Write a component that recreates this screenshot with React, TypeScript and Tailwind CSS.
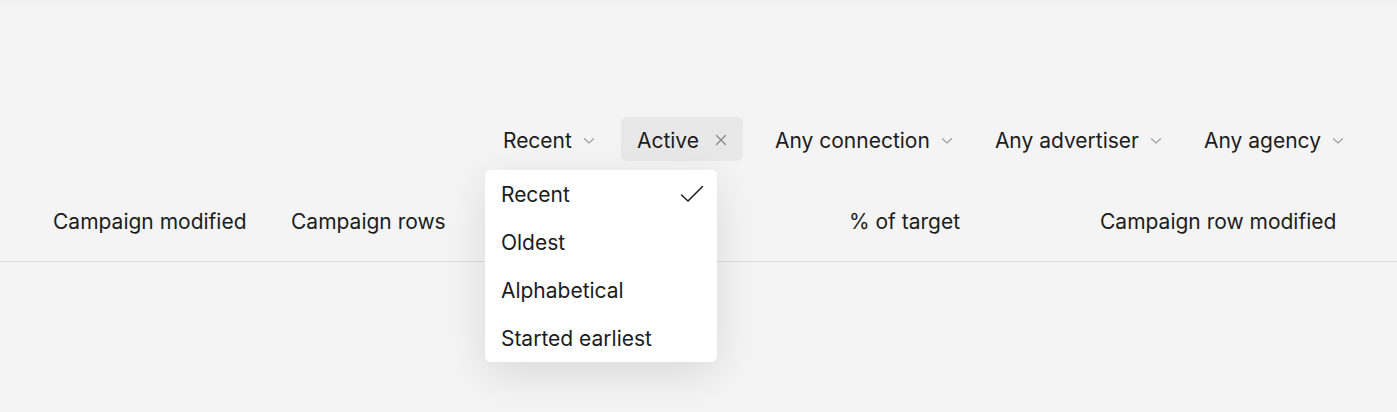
import { useState } from 'react'

const sortOptions = ['Recent', 'Oldest', 'Alphabetical', 'Started earliest']

function Chevron() {
  return (
    <svg width="12" height="8" viewBox="0 0 12 8" fill="none" className="ml-[11px] mt-[1px]">
      <path d="M1.5 1.8 6 6 10.5 1.8" stroke="#a3a3a3" strokeWidth="1.3" strokeLinecap="round" strokeLinejoin="round" />
    </svg>
  )
}

function FilterButton({ label }: { label: string }) {
  return (
    <button className="flex h-11 items-center rounded-md px-4 pt-[3px] text-[21px] text-[#1c1c1c]">
      {label}
      <Chevron />
    </button>
  )
}

function SortMenu({ selected }: { selected: string }) {
  return (
    <div className="absolute left-[-2px] top-[53px] z-10 w-[232px] rounded-md bg-white shadow-[0_12px_44px_rgba(0,0,0,0.11)]">
      {sortOptions.map((opt) => (
        <div key={opt} className="flex h-12 items-center justify-between px-4 pt-[2px] text-[21px] text-[#1c1c1c]">
          <span>{opt}</span>
          {opt === selected && (
            <svg width="24" height="18" viewBox="0 0 24 18" fill="none" className="mr-[-3px] mt-[-2px]">
              <path d="M1.5 10 8 16 22.5 1.5" stroke="#1c1c1c" strokeWidth="1.5" strokeLinecap="round" strokeLinejoin="round" />
            </svg>
          )}
        </div>
      ))}
    </div>
  )
}

export default function App() {
  const [sort] = useState('Recent')

  return (
    <div className="min-h-[412px] bg-[#f4f4f4] font-['Inter',sans-serif]" style={{ backgroundImage: 'linear-gradient(#f1f1f1, #f4f4f4 12px)' }}>
      <div className="flex justify-end gap-[10px] pr-[37px] pt-[117px]">
        <div className="relative">
          <FilterButton label={sort} />
          <SortMenu selected={sort} />
        </div>
        <button className="mr-[6px] flex h-11 items-center rounded-md bg-[#e8e8e8] pl-[16px] pr-[16px] pt-[3px] text-[21px] text-[#1c1c1c]">
          Active
          <svg width="12" height="12" viewBox="0 0 12 12" fill="none" className="ml-[16px] mt-[-2px]">
            <path d="M1.5 1.5 10.5 10.5M10.5 1.5 1.5 10.5" stroke="#8a8a8a" strokeWidth="1.4" strokeLinecap="round" />
          </svg>
        </button>
        <FilterButton label="Any connection" />
        <FilterButton label="Any advertiser" />
        <FilterButton label="Any agency" />
      </div>

      <div className="mt-[20px] flex h-[81px] items-center border-b border-[#dcdcdc] pl-[53px] pt-[2px] text-[21px] text-[#1c1c1c]">
        <div className="w-[238px]">Campaign modified</div>
        <div className="w-[558px]">Campaign rows</div>
        <div className="w-[251px]">% of target</div>
        <div>Campaign row modified</div>
      </div>
    </div>
  )
}
